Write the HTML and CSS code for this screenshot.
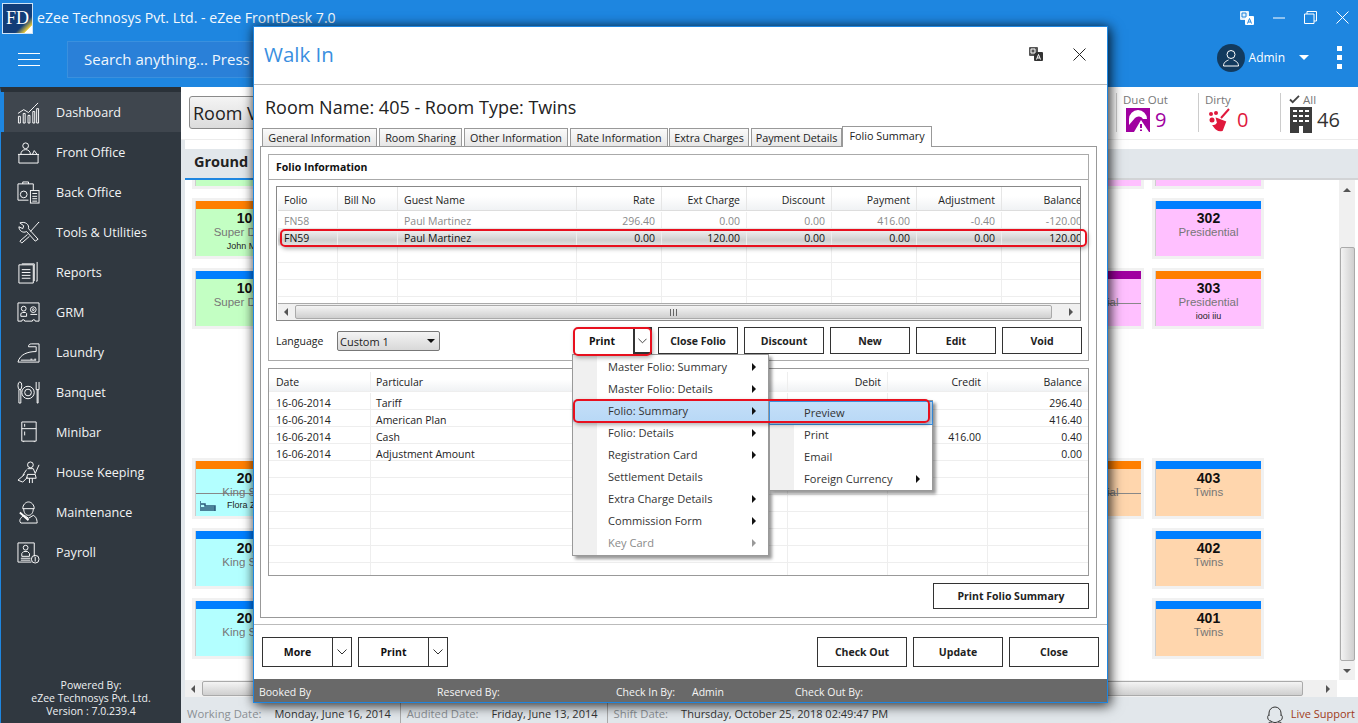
FILE: index.html
```html
<!DOCTYPE html>
<html lang="en">
<head>
<meta charset="utf-8">
<title>eZee FrontDesk 7.0</title>
<link rel="stylesheet" href="styles.css">
</head>
<body>
<div class="app">
  <header class="top">
    <div class="titlebar">
      <div class="logo"><span>FD</span></div>
      <div class="apptitle">eZee Technosys Pvt. Ltd. - eZee FrontDesk 7.0</div>
      <div class="winctl">
        <svg class="ic-trans" viewBox="0 0 16 16" width="16" height="16"><rect x="1" y="1" width="9" height="9" rx="1" fill="#e8f2fb"/><rect x="6" y="6" width="9" height="9" rx="1" fill="#fff"/><path d="M3 3h4v4H3z" fill="none" stroke="#1e86e0"/><path d="M8.500 13.500l2-5 2 5M9.300 12h2.400" fill="none" stroke="#1e86e0"/></svg>
        <svg class="ic-win" viewBox="0 0 12 12" width="12" height="12"><path d="M0 6h12" stroke="#fff" fill="none"/></svg>
        <svg class="ic-win" viewBox="0 0 13 13" width="13" height="13"><path d="M3 3V.5h9.500V10H10M.5 3h9.500v9.500H.5z" stroke="#fff" fill="none"/></svg>
        <svg class="ic-win" viewBox="0 0 13 13" width="13" height="13"><path d="M.5.500l12 12M12.500.500l-12 12" stroke="#fff" fill="none"/></svg>
      </div>
    </div>
    <div class="searchrow">
      <div class="burger"><i></i><i></i><i></i></div>
      <div class="search">Search anything... Press</div>
      <div class="user">
        <div class="avatar"><svg viewBox="0 0 20 20" width="20" height="20"><circle cx="10" cy="6.500" r="4" fill="none" stroke="#fff"/><path d="M2.500 18c0-4 3-5 5-6M17.500 18c0-4-3-5-5-6M2.500 18h15" fill="none" stroke="#fff"/></svg></div>
        <span class="uname">Admin</span>
        <span class="caret"></span>
        <div class="kebab"><i></i><i></i><i></i></div>
      </div>
    </div>
  </header>

  <div class="body">
    <nav class="side">
      <ul class="nav">
        <li class="active"><svg viewBox="0 0 24 24" width="24" height="24" fill="none" stroke="#fff"><path d="M1 13l6-4 5 3 6-6 4-4M1.500 16v7h2v-7zM6.500 13v10h2V13zM11.500 15v8h2v-8zM16.500 11v12h2V11zM20.500 8v15h2V8z"/></svg><span>Dashboard</span></li>
        <li><svg viewBox="0 0 24 24" width="24" height="24" fill="none" stroke="#fff"><circle cx="9" cy="5" r="3"/><path d="M4 14c0-3 2-5 5-5s5 2 5 5M1 14h22M2 14v9h20v-9M16 14l2-4 3 4"/></svg><span>Front Office</span></li>
        <li><svg viewBox="0 0 24 24" width="24" height="24" fill="none" stroke="#fff"><path d="M12 20H1V3h16v7M6 3V1h6v2"/><circle cx="7" cy="14" r="3.500"/><rect x="14" y="10" width="9" height="13"/><path d="M16 13h5M16 16h5M16 18.500h5M16 21h5"/></svg><span>Back Office</span></li>
        <li><svg viewBox="0 0 24 24" width="24" height="24" fill="none" stroke="#fff"><path d="M3 2l4 3-1 3-4-2c0 4 4 7 8 5l9 10 3-2-10-11c1-4-3-8-9-6zM23 1l-9 10M11 14L3 21l2 2 8-7M22 1l1 1"/></svg><span>Tools &amp; Utilities</span></li>
        <li><svg viewBox="0 0 24 24" width="24" height="24" fill="none" stroke="#fff"><path d="M5 3h13v18M21 1v20h-1"/><path d="M2 4h15v19H2zM5 9h9M5 12h9M5 15h9M5 18h9"/></svg><span>Reports</span></li>
        <li><svg viewBox="0 0 24 24" width="24" height="24" fill="none" stroke="#fff"><path d="M1 2h22v19h-4a1.500 1.500 0 0 0-3 0H8a1.500 1.500 0 0 0-3 0H1z"/><circle cx="7" cy="8" r="2.500"/><path d="M4 16v-3l2-1h3l1 1v3zM14 14h7"/><circle cx="17" cy="9" r="3"/><circle cx="17" cy="9" r="1"/></svg><span>GRM</span></li>
        <li><svg viewBox="0 0 24 24" width="24" height="24" fill="none" stroke="#fff"><path d="M1 22h22V3h-8c-2 0-3 1-3 3h8v5c-9 0-17 3-19 11zM14 19h2M18 19h2M4 20h16"/></svg><span>Laundry</span></li>
        <li><svg viewBox="0 0 24 24" width="24" height="24" fill="none" stroke="#fff"><ellipse cx="3" cy="5" rx="2" ry="4"/><path d="M2 9h2v14H2zM20 1v8M23 1v8M20 9h3M21 9v14h1V9"/><circle cx="11.500" cy="12" r="6.500"/><circle cx="11.500" cy="12" r="3.500"/></svg><span>Banquet</span></li>
        <li><svg viewBox="0 0 24 24" width="24" height="24" fill="none" stroke="#fff"><path d="M5 1h15v20H5zM5 8h15M8 3v3M8 11v4M7 21v1M18 21v1"/></svg><span>Minibar</span></li>
        <li><svg viewBox="0 0 24 24" width="24" height="24" fill="none" stroke="#fff"><circle cx="14" cy="4" r="3"/><path d="M11 8h6l2 5 4-9M10 9l-4 6M8 14l-7 6 5 2 5-5M11 14h8l1 4H10zM13 18v5M16 18v5"/></svg><span>House Keeping</span></li>
        <li><svg viewBox="0 0 24 24" width="24" height="24" fill="none" stroke="#fff"><path d="M6 8c0-4 3-7 6-7s6 3 6 7zM7 8c0 4 2 7 5 7s5-3 5-7M4 23c-3-3 1-7 4-8l4 3 5-3c2 1 4 3 4 8z"/><path d="M3 12l9 8" stroke-width="2"/></svg><span>Maintenance</span></li>
        <li><svg viewBox="0 0 24 24" width="24" height="24" fill="none" stroke="#fff"><path d="M18 16V2H1v20h14"/><circle cx="9" cy="7" r="2.500"/><path d="M5 16v-3l2-2h4l2 2v3zM4 18h10M4 20h10"/><circle cx="19" cy="19" r="4"/><path d="M19 16.500v5"/></svg><span>Payroll</span></li>
      </ul>
      <div class="powered">Powered By:<br>eZee Technosys Pvt. Ltd.<br>Version : 7.0.239.4</div>
    </nav>

    <main class="main">
      <div class="toolbar">
        <button class="viewbtn">Room View</button>
        <div class="stats">
          <div class="stat">
            <div class="stat-l">Due Out</div>
            <div class="stat-v due"><svg viewBox="0 0 24 24" width="24" height="26"><path d="M0 0h24v24H0z" fill="#a000a0"/><path d="M3 11a9 9 0 0 1 18 0l-4 0a5 5 0 0 0-8-1l-6 7z" fill="#fff"/><path d="M8 24l7-12 8 12z" fill="#fff"/><path d="M15 16v4M15 21.500v1.500" stroke="#a000a0" stroke-width="2"/></svg><b>9</b></div>
          </div>
          <div class="stat">
            <div class="stat-l">Dirty</div>
            <div class="stat-v dirty"><svg viewBox="0 0 24 24" width="24" height="26"><path d="M21 1L13 10M9 11l8 3-3 8c-3 1-6-1-8-4 2 0 3-1 4-3z" fill="#e0193c" stroke="#e0193c" stroke-width="2"/><circle cx="3" cy="6" r="2" fill="#e0193c"/><circle cx="8" cy="5" r="2" fill="#e0193c"/><circle cx="4" cy="12" r="2.500" fill="#e0193c"/></svg><b>0</b></div>
          </div>
          <div class="stat">
            <div class="stat-l"><svg viewBox="0 0 12 10" width="11" height="9"><path d="M1 5l3 3 7-7" fill="none" stroke="#444" stroke-width="2"/></svg> All</div>
            <div class="stat-v all"><svg viewBox="0 0 22 26" width="22" height="26"><path d="M0 0h22v26H0z" fill="#3c3c3c"/><path d="M3 3h4v2H3zM9 3h4v2H9zM15 3h4v2h-4zM3 8h4v2H3zM9 8h4v2H9zM15 8h4v2h-4zM3 13h4v2H3zM9 13h4v2H9zM15 13h4v2h-4zM9 19h4v7H9z" fill="#fff"/></svg><b>46</b></div>
          </div>
        </div>
      </div>
      <div class="floortab"><span>Ground</span></div>
      <div class="floorbody">
        <div class="rooms">
          <div class="group g1">
            <div class="card green"><i class="bar"></i></div>
            <div class="card pink c8"><i class="bar"></i></div>
            <div class="card pink c9"><i class="bar"></i></div>
            <div class="card green"><i class="bar orange"></i><b>101</b><em>Super Deluxe</em><small>John Miller</small></div>
            <div class="card pink c9"><i class="bar blue"></i><b>302</b><em>Presidential</em></div>
            <div class="card green"><i class="bar blue"></i><b>102</b><em>Super Deluxe</em></div>
            <div class="card pink c8"><i class="bar purple"></i><b>301</b><em class="line">Presidential</em><small class="after-line">Ann</small></div>
            <div class="card pink c9"><i class="bar orange"></i><b>303</b><em>Presidential</em><small>iooi iiu</small></div>
          </div>
          <div class="group g2">
            <div class="card cyan"><i class="bar orange"></i><b>203</b><em class="line">King Suite</em><small class="bed"><svg viewBox="0 0 16 10" width="16" height="10"><path d="M0 0v10M1 9h14v1M15 10V5H5V3H1M1 7h14" fill="none" stroke="#2a5a78" stroke-width="1.500"/></svg>Flora Z</small></div>
            <div class="card peach c8"><i class="bar orange"></i><b>503</b><em class="line">Presidential</em><small class="after-line">Personal</small></div>
            <div class="card peach c9"><i class="bar blue"></i><b>403</b><em>Twins</em></div>
            <div class="card cyan"><i class="bar blue"></i><b>202</b><em>King Suite</em></div>
            <div class="card peach c9"><i class="bar blue"></i><b>402</b><em>Twins</em></div>
            <div class="card cyan"><i class="bar blue"></i><b>201</b><em>King Suite</em></div>
            <div class="card peach c9"><i class="bar blue"></i><b>401</b><em>Twins</em></div>
          </div>
        </div>
        <div class="vscroll"><span class="up"></span><span class="thumb"></span><span class="down"></span></div>
      </div>
      <div class="hscroll main-h"><span class="lt"></span><span class="thumb"></span><span class="rt"></span></div>
      <div class="statusbar">
        <span class="lab">Working Date:</span><span class="val">Monday, June 16, 2014</span><span class="sep"></span>
        <span class="lab">Audited Date:</span><span class="val">Friday, June 13, 2014</span><span class="sep"></span>
        <span class="lab">Shift Date:</span><span class="val">Thursday, October 25, 2018 02:49:47 PM</span>
        <span class="live"><svg viewBox="0 0 18 20" width="18" height="20"><path d="M3 11V8a6 6 0 0 1 12 0v3M5 16c-4 0-4-6-2-6M13 16c4 0 4-6 2-6M5 16c2 2 6 2 8 0M1 20c1-2 3-3 5-3M17 20c-1-2-3-3-5-3" fill="none" stroke="#333"/></svg>Live Support</span>
      </div>
    </main>
  </div>

  <section class="modal">
    <div class="m-head">
      <h1>Walk In</h1>
      <div class="m-icons">
        <svg viewBox="0 0 16 16" width="16" height="16"><rect x="1" y="1" width="9" height="9" rx="1" fill="#555"/><rect x="6" y="6" width="9" height="9" rx="1" fill="#333"/><path d="M3 3h4v4H3z" fill="none" stroke="#fff"/><path d="M8.500 13.500l2-5 2 5M9.300 12h2.400" fill="none" stroke="#fff"/></svg>
        <svg viewBox="0 0 13 13" width="13" height="13"><path d="M.5.500l12 12M12.500.500l-12 12" stroke="#222" fill="none"/></svg>
      </div>
    </div>
    <div class="m-body">
      <h2>Room Name: 405 - Room Type: Twins</h2>
      <div class="tabs">
        <span>General Information</span><span>Room Sharing</span><span>Other Information</span><span>Rate Information</span><span>Extra Charges</span><span>Payment Details</span><span class="on">Folio Summary</span>
      </div>
      <div class="panel">
        <fieldset class="folio">
          <div class="folio-h">Folio Information</div>
          <div class="ftable">
            <div class="frow fhead"><span class="l">Folio</span><span class="l">Bill No</span><span class="l">Guest Name</span><span>Rate</span><span>Ext Charge</span><span>Discount</span><span>Payment</span><span>Adjustment</span><span>Balance</span></div>
            <div class="frow muted"><span class="l">FN58</span><span class="l"></span><span class="l">Paul Martinez</span><span>296.40</span><span>0.00</span><span>0.00</span><span>416.00</span><span>-0.40</span><span>-120.00</span></div>
            <div class="frow sel"><span class="l">FN59</span><span class="l"></span><span class="l">Paul Martinez</span><span>0.00</span><span>120.00</span><span>0.00</span><span>0.00</span><span>0.00</span><span>120.00</span></div>
            <div class="frow"><span></span><span></span><span></span><span></span><span></span><span></span><span></span><span></span><span></span></div>
            <div class="frow"><span></span><span></span><span></span><span></span><span></span><span></span><span></span><span></span><span></span></div>
            <div class="frow"><span></span><span></span><span></span><span></span><span></span><span></span><span></span><span></span><span></span></div>
            <div class="frow short"><span></span><span></span><span></span><span></span><span></span><span></span><span></span><span></span><span></span></div>
            <div class="hscroll t-h"><span class="lt"></span><span class="thumb"><i></i></span><span class="rt"></span></div>
          </div>
          <div class="factions">
            <label class="lang-l">Language</label>
            <div class="select">Custom 1<i></i></div>
            <div class="split print-split"><button class="main-b">Print</button><button class="arrow"><svg viewBox="0 0 10 6" width="9" height="6"><path d="M.5.500L5 5 9.500.500" fill="none" stroke="#333"/></svg></button></div>
            <button class="btn">Close Folio</button><button class="btn">Discount</button><button class="btn">New</button><button class="btn">Edit</button><button class="btn">Void</button>
          </div>
        </fieldset>
        <div class="ledger">
          <div class="lrow lhead"><span class="l">Date</span><span class="l">Particular</span><span>Debit</span><span>Credit</span><span>Balance</span></div>
          <div class="lrow"><span class="l">16-06-2014</span><span class="l">Tariff</span><span></span><span></span><span>296.40</span></div>
          <div class="lrow"><span class="l">16-06-2014</span><span class="l">American Plan</span><span></span><span></span><span>416.40</span></div>
          <div class="lrow"><span class="l">16-06-2014</span><span class="l">Cash</span><span></span><span>416.00</span><span>0.40</span></div>
          <div class="lrow"><span class="l">16-06-2014</span><span class="l">Adjustment Amount</span><span></span><span></span><span>0.00</span></div>
          <div class="lrow"><span></span><span></span><span></span><span></span><span></span></div>
          <div class="lrow"><span></span><span></span><span></span><span></span><span></span></div>
          <div class="lrow"><span></span><span></span><span></span><span></span><span></span></div>
          <div class="lrow"><span></span><span></span><span></span><span></span><span></span></div>
          <div class="lrow"><span></span><span></span><span></span><span></span><span></span></div>
          <div class="lrow"><span></span><span></span><span></span><span></span><span></span></div>
          <div class="lrow"><span></span><span></span><span></span><span></span><span></span></div>
        </div>
        <div class="pfs"><button class="btn wide">Print Folio Summary</button></div>
      </div>
      <div class="m-actions">
        <div class="split foot"><button class="main-b">More</button><button class="arrow"><svg viewBox="0 0 10 6" width="10" height="6"><path d="M.5.500L5 5 9.500.500" fill="none" stroke="#333"/></svg></button></div>
        <div class="split foot"><button class="main-b">Print</button><button class="arrow"><svg viewBox="0 0 10 6" width="10" height="6"><path d="M.5.500L5 5 9.500.500" fill="none" stroke="#333"/></svg></button></div>
        <div class="spacer"></div>
        <button class="btn big">Check Out</button><button class="btn big">Update</button><button class="btn big">Close</button>
      </div>
    </div>
    <div class="m-foot">
      <span class="f1">Booked By</span><span class="f2">Reserved By:</span><span class="f3">Check In By:</span><span class="f4">Admin</span><span class="f5">Check Out By:</span>
    </div>
  </section>

  <div class="menu mainmenu">
    <div class="mi"><span>Master Folio: Summary</span><i></i></div>
    <div class="mi"><span>Master Folio: Details</span><i></i></div>
    <div class="mi hot"><span>Folio: Summary</span><i></i></div>
    <div class="mi"><span>Folio: Details</span><i></i></div>
    <div class="mi"><span>Registration Card</span><i></i></div>
    <div class="mi"><span>Settlement Details</span></div>
    <div class="mi"><span>Extra Charge Details</span><i></i></div>
    <div class="mi"><span>Commission Form</span><i></i></div>
    <div class="mi off"><span>Key Card</span><i></i></div>
  </div>
  <div class="menu submenu">
    <div class="mi hot2"><span>Preview</span></div>
    <div class="mi"><span>Print</span></div>
    <div class="mi"><span>Email</span></div>
    <div class="mi"><span>Foreign Currency</span><i></i></div>
  </div>

  <div class="mark m-row"></div>
  <div class="mark m-print"></div>
  <div class="mark m-menu"></div>
</div>
</body>
</html>
```

FILE: styles.css
```css
* { box-sizing: border-box; }
html, body { margin: 0; padding: 0; }
body { width: 1358px; height: 723px; overflow: hidden; font-family: "Open Sans", "Noto Sans", sans-serif; color: #222; background: #fff; }
button { font-family: inherit; cursor: pointer; }
.app { position: relative; width: 1358px; height: 723px; display: flex; flex-direction: column; }

/* header */
.top { height: 87px; background: #1e86e0; color: #fff; flex: none; }
.titlebar { height: 35px; display: flex; align-items: center; padding-left: 2px; }
.logo { width: 31px; height: 31px; margin-top: 1px; background: linear-gradient(135deg, #123d78 70%, #e8c83a 86%, #fff 87%); border: 1px solid #cfe4f7; display: flex; align-items: center; justify-content: center; }
.logo span { font: 18px "Liberation Serif", serif; color: #fff; }
.apptitle { margin-left: 4px; font-size: 14.100px; color: #f4f9fd; }
.winctl { margin-left: auto; display: flex; align-items: center; gap: 19px; padding-right: 9px; }
.ic-trans { margin-right: -1px; }
.searchrow { height: 52px; display: flex; align-items: center; }
.burger { width: 67px; padding-left: 18px; display: flex; flex-direction: column; gap: 5px; margin-top: -3px; }
.burger i { display: block; width: 22px; height: 1px; background: #fff; }
.search { width: 600px; height: 37px; margin-top: -3px; padding-left: 16px; line-height: 35px; font-size: 15px; color: #f0f7fd; background: #2a80d8; border: 1px solid #3a90de; }
.user { margin-left: auto; display: flex; align-items: center; margin-top: -7px; }
.avatar { width: 28px; height: 28px; border-radius: 50%; background: #123a5e; display: flex; align-items: center; justify-content: center; }
.uname { font-size: 12px; margin-left: 4px; }
.caret { width: 0; height: 0; border: 5px solid transparent; border-top: 5px solid #fff; border-bottom: 0; margin-left: 14px; }
.kebab { margin-left: 28px; margin-right: 16px; display: flex; flex-direction: column; gap: 4px; }
.kebab i { display: block; width: 5px; height: 5px; background: #fff; }

/* layout */
.body { flex: 1; display: flex; min-height: 0; }
.side { width: 181px; flex: none; background: #303840; border-left: 1px solid #1e86e0; border-top: 5px solid #2a3138; display: flex; flex-direction: column; color: #fff; }
.nav { list-style: none; margin: 0; padding: 0; flex: 1; }
.nav li { height: 40px; display: flex; align-items: center; padding-left: 16px; font-size: 12.600px; color: #f2f4f5; }
.nav li svg { width: 23px; height: 23px; flex: none; stroke-width: 1; }
.nav li span { margin-left: 16px; }
.nav li.active { background: #3f464e; box-shadow: inset 3px 0 0 #1e86e0; }
.powered { text-align: center; font-size: 10.500px; line-height: 13px; padding-bottom: 5px; color: #eef0f2; }
.main { flex: 1; min-width: 0; display: flex; flex-direction: column; background: #fff; border-left: 4px solid #e2e7eb; }

/* toolbar */
.toolbar { height: 53px; margin-left: -4px; background: #fff; display: flex; align-items: flex-start; justify-content: space-between; flex: none; border-bottom: 1px solid #ececec; }
.viewbtn { width: 200px; height: 33px; margin: 9px 0 0 8px; border: 1px solid #8a8a8a; border-radius: 3px; background: linear-gradient(#f4f4f4, #dcdcdc); font-size: 18px; text-align: left; padding: 0 0 0 3px; color: #222; }
.stats { display: flex; padding-top: 6px; }
.stat { width: 82px; height: 39px; border-left: 1px solid #ccc; padding-left: 6px; }
.stat:last-child { width: 78px; }
.stat:last-child .stat-l { padding-left: 2px; }
.stat-l { font-size: 11.500px; line-height: 13px; color: #777; height: 14px; }
.stat-v { display: flex; align-items: center; height: 26px; padding-left: 3px; }
.stat-v b { font-weight: 400; font-size: 20px; line-height: 24px; margin-left: 5px; }
.due b { color: #a000a0; }
.dirty b { color: #e0193c; }
.all b { color: #333; }
.floortab { height: 31px; margin-top: 9px; background: #e2e7eb; flex: none; border-bottom: 2px solid #d2d4d6; }
.floortab span { display: block; width: 72px; height: 31px; padding-left: 9px; border-bottom: 2px solid #1e86e0; font-weight: 700; font-size: 14.500px; line-height: 25px; color: #222; }

/* rooms */
.floorbody { flex: 1; min-height: 0; display: flex; background: #fff; overflow: hidden; }
.rooms { flex: 1; padding-left: 10px; overflow: hidden; }
.group { display: grid; grid-template-columns: repeat(9, 106px); column-gap: 14px; grid-auto-rows: 55px; row-gap: 15px; }
.g1 { margin-top: -49px; }
.g2 { margin-top: 135px; }
.card { grid-column: 1; position: relative; display: flex; flex-direction: column; align-items: center; box-shadow: 0 0 0 3px #f1f1f1; border-left: 1px solid #cdcdcd; font-family: "Liberation Sans", sans-serif; }
.card.c8 { grid-column: 8; }
.card.c9 { grid-column: 9; }
.card .bar { display: block; width: 100%; height: 8px; flex: none; background: #007fff; }
.bar.orange { background: #ff7f00; }
.bar.purple { background: #a000a0; }
.card b { font-size: 14px; line-height: 13px; margin-top: 3px; color: #111; }
.card em { font-style: normal; font-size: 11.500px; line-height: 14px; color: #777; white-space: nowrap; }
.card em.line { width: 100%; text-align: center; border-bottom: 1px solid #888; height: 9px; }
.card small { font-size: 9px; line-height: 11px; margin-top: 2px; color: #222; white-space: nowrap; }
.card small.after-line { margin-top: 6px; }
.card small.bed { align-self: flex-start; display: flex; align-items: center; gap: 11px; margin: 6px 0 0 4px; }
.green { background: #c3ffc3; }
.cyan { background: #b3ffff; }
.pink { background: #ffc0ff; }
.peach { background: #ffd6ad; }
.vscroll { width: 16px; margin-right: 3px; background: #f0f0f0; display: flex; flex-direction: column; align-items: center; }
.vscroll .up { width: 0; height: 0; margin: 8px 0 7px; border: 4px solid transparent; border-top: 0; border-bottom: 4px solid #555; }
.vscroll .thumb { width: 15px; flex: 1; border: 1px solid #aaa; border-radius: 2px; background: linear-gradient(90deg, #f3f3f3, #cfcfcf); margin-top: 48px; }
.vscroll .down { width: 0; height: 0; margin: 8px 0 7px; border: 4px solid transparent; border-bottom: 0; border-top: 4px solid #555; }

.hscroll { display: flex; align-items: center; background: #f0f0f0; }
.hscroll .lt { width: 0; height: 0; margin: 0 7px 0 6px; border: 4px solid transparent; border-left: 0; border-right: 4px solid #555; }
.hscroll .rt { width: 0; height: 0; margin: 0 7px 0 auto; border: 4px solid transparent; border-right: 0; border-left: 4px solid #555; }
.hscroll .thumb { flex: 1; height: 15px; border: 1px solid #aaa; border-radius: 2px; background: linear-gradient(#f4f4f4, #cfcfcf); position: relative; display: flex; align-items: center; justify-content: center; }
.main-h { height: 17px; flex: none; margin-right: 21px; }
.main-h .thumb { margin-right: 23px; }
.t-h .thumb { margin-right: 17px; height: 14px; }
.t-h .thumb i { display: block; width: 8px; height: 7px; background: repeating-linear-gradient(90deg, #666 0 1px, transparent 1px 3px); }
.statusbar { height: 26px; flex: none; background: #e2e7eb; display: flex; align-items: center; font-size: 11px; padding: 7px 0 0 2px; color: #333; }
.statusbar .lab { color: #8a8f94; font-size: 11.300px; }
.statusbar .val { margin-left: 13px; color: #333; }
.statusbar .sep { width: 1px; align-self: stretch; margin: -7px 6px 0 9px; background: #aaa; }
.live { margin-left: auto; display: flex; align-items: center; gap: 7px; color: #a03a1a; padding-right: 3px; margin-top: -1px; }
.live svg { margin-top: 3px; }

/* modal */
.modal { position: absolute; left: 253px; top: 26px; width: 855px; height: 677px; background: #fff; border: 1px solid #1e86e0; box-shadow: 3px 3px 12px rgba(0,0,0,.6), 0 0 10px rgba(0,0,0,.45); display: flex; flex-direction: column; }
.m-head { height: 58px; flex: none; border-bottom: 1px solid #bbb; display: flex; align-items: center; padding: 0 21px 3px 10px; }
.m-head h1 { margin: 0; font-weight: 400; font-size: 20.500px; color: #3a8fe0; }
.m-icons { margin-left: auto; display: flex; align-items: center; gap: 29px; }
.m-body { flex: 1; min-height: 0; padding: 0 6px; display: flex; flex-direction: column; }
.m-body h2 { margin: 10px 0 0 5px; font-weight: 400; font-size: 18px; line-height: 25px; color: #222; height: 33px; flex: none; }
.tabs { display: flex; height: 18px; padding-left: 2px; flex: none; font-size: 10.800px; color: #222; position: relative; z-index: 1; }
.tabs span { height: 18px; width: 115px; margin-right: 2px; text-align: center; border: 1px solid #999; border-bottom: 0; background: linear-gradient(#fafafa, #e6e6e6); line-height: 18px; white-space: nowrap; }
.tabs span:nth-child(2) { width: 83px; }
.tabs span:nth-child(3) { width: 104px; }
.tabs span:nth-child(4) { width: 98px; margin-right: 1px; }
.tabs span:nth-child(5) { width: 80px; }
.tabs span:nth-child(6) { width: 91px; margin-right: 0; }
.tabs .on { background: #fff; width: 90px; height: 21px; margin: -2px 0 0; line-height: 18px; }
.panel { height: 472px; flex: none; margin-right: 4px; border: 1px solid #999; padding: 7px; display: flex; flex-direction: column; }
.folio { margin: 0; padding: 0; min-width: 0; height: 207px; border: 1px solid #aaa; flex: none; }
.folio-h { height: 25px; border-bottom: 1px solid #aaa; font-weight: 700; font-size: 10.500px; line-height: 24px; padding-left: 7px; color: #111; }
.ftable { margin: 6px 7px 0; height: 135px; border: 1px solid #888; padding-left: 1px; font-size: 10.500px; position: relative; overflow: hidden; }
.frow { display: grid; grid-template-columns: 60px 60px 179px 85px 85px 85px 85px 85px 80px; grid-template-rows: 16px; height: 17px; border-bottom: 1px solid #eee; }
.frow span { text-align: right; line-height: 18px; border-right: 1px solid #eee; padding-right: 6px; white-space: nowrap; overflow: visible; }
.frow span.l { text-align: left; padding-left: 6px; padding-right: 0; }
.frow span:last-child { border-right: 0; padding-right: 0; }
.frow.fhead { height: 24px; grid-template-rows: 23px; background: linear-gradient(#fff 40%, #f0f2f4); border-bottom: 1px solid #ddd; margin-bottom: 1px; }
.fhead span { line-height: 26px; border-right: 1px solid #e6e6e6; }
.muted { color: #8a8a8a; }
.frow.sel { background: linear-gradient(#f4f4f4, #cfcfcf 70%, #e0e0e0); color: #111; }
.frow.short { height: 6px; overflow: hidden; border-bottom: 0; }
.t-h { height: 17px; border-top: 1px solid #aaa; }
.factions { display: flex; align-items: flex-start; margin: 6px 6px 0 7px; height: 28px; font-size: 10.500px; }
.factions > * { flex: none; }
.lang-l { width: 61px; color: #222; line-height: 28px; }
.select { position: relative; width: 103px; height: 20px; margin: 4px 133px 0 0; border: 1px solid #777; border-radius: 2px; background: linear-gradient(#f4f4f4, #d8d8d8); line-height: 19px; padding-left: 2px; font-size: 11px; }
.select i { position: absolute; right: 4px; top: 7px; border: 4px solid transparent; border-top: 4px solid #111; border-bottom: 0; }
.split { display: flex; }
.split button { background: #fff; border: 1px solid #333; height: 27px; padding: 0; font-weight: 700; font-size: 10.500px; color: #111; }
.split .main-b { width: 60px; border-right: 0; }
.split .arrow { width: 19px; display: flex; align-items: center; justify-content: center; }
.print-split .main-b { border-color: transparent; padding-right: 3px; }
.print-split .arrow { border-width: 2px; border-color: #333; }
.btn { width: 80px; height: 27px; background: #fff; border: 1px solid #333; margin-left: 6px; padding: 0; font-weight: 700; font-size: 10.500px; color: #222; }
.ledger { margin-top: 7px; height: 208px; border: 1px solid #999; font-size: 10.500px; flex: none; overflow: hidden; padding-top: 3px; }
.lrow { display: grid; grid-template-columns: 102px 417px 100px 100px 1fr; grid-template-rows: 16px; height: 17px; border-bottom: 1px solid #eee; }
.lrow span { text-align: right; line-height: 20px; border-right: 1px solid #eee; padding-right: 6px; white-space: nowrap; }
.lrow span.l { text-align: left; padding-right: 0; padding-left: 5px; }
.lrow span:first-child { padding-left: 7px; }
.lrow span:last-child { border-right: 0; }
.lrow.lhead { height: 20px; grid-template-rows: 19px; background: linear-gradient(#fff 40%, #f0f2f4); margin-bottom: 1px; }
.lhead span { line-height: 21px; }
.pfs { display: flex; justify-content: flex-end; margin-top: 7px; }
.btn.wide { width: 156px; height: 26px; }
.m-actions { display: flex; margin: 6px -6px 0; padding: 12px 8px 0; border-top: 1px solid #bbb; height: 42px; align-items: flex-start; flex: none; box-sizing: content-box; }
.foot { margin-right: 6px; }
.foot button { height: 30px; }
.foot .main-b { width: 70px; }
.foot .arrow { width: 20px; }
.spacer { flex: 1; }
.btn.big { width: 90px; height: 30px; }
.m-foot { height: 23px; flex: none; padding-top: 3px; background: #696969; color: #f5f5f5; font-size: 10.500px; display: flex; align-items: center; }
.f1 { margin-left: 5px; width: 178px; }
.f2 { width: 179px; }
.f3 { width: 76px; }
.f4 { width: 103px; }

/* menus */
.menu { position: absolute; border: 1px solid #999; box-shadow: 3px 3px 3px rgba(0,0,0,.4); font-size: 11.100px; color: #333; background: linear-gradient(90deg, #f0f0f0 24px, #fff 24px); }
.mainmenu { left: 572px; top: 354px; width: 197px; height: 202px; padding-top: 1px; }
.submenu { left: 769px; top: 400px; width: 164px; height: 91px; padding-top: 1px; }
.mi { height: 22px; display: flex; align-items: center; padding: 0 0 2px 35px; position: relative; }
.submenu .mi { padding: 0 0 2px 34px; }
.mi i { position: absolute; right: 12px; top: 7px; border: 4px solid transparent; border-left: 4px solid #111; border-right: 0; }
.hot { background: linear-gradient(#c4dff8, #b8d8f6); }
.submenu .hot2 { background: linear-gradient(#c4dff8, #b8d8f6); outline: 1px solid #3a90e0; }
.off { color: #8a8a8a; }
.off i { border-left-color: #999; }
.mark { position: absolute; border: 2px solid #e8101e; border-radius: 5px; box-shadow: 1px 2px 4px rgba(0,0,0,.3); pointer-events: none; }
.m-row { left: 280px; top: 229px; width: 807px; height: 18px; }
.m-print { left: 573px; top: 327px; width: 79px; height: 29px; }
.m-menu { left: 573px; top: 399px; width: 357px; height: 24px; }
```
